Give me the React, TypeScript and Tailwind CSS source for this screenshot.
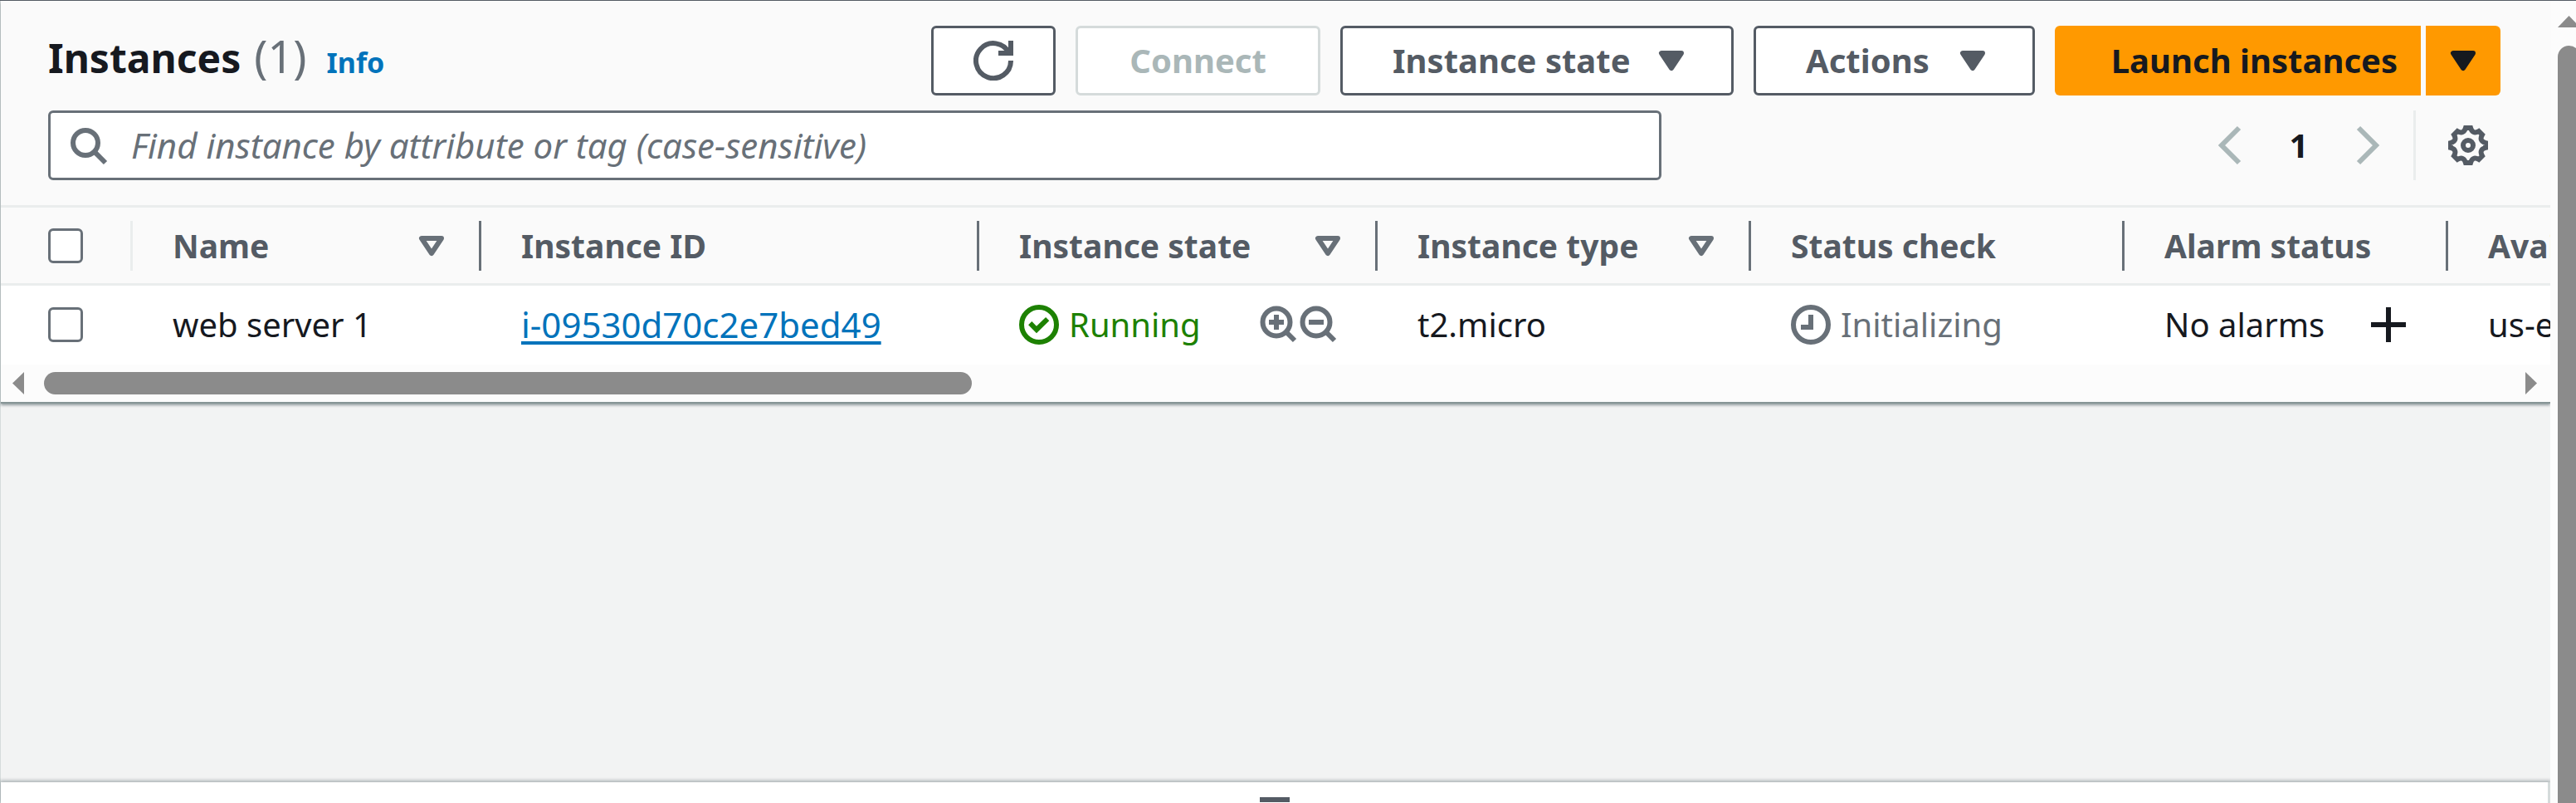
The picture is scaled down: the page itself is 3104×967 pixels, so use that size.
import React from "react";

type IconProps = { className?: string; children: React.ReactNode };

function Icon({ className = "", children }: IconProps) {
  return (
    <svg
      viewBox="0 0 16 16"
      className={`size-12 shrink-0 ${className}`}
      fill="none"
      stroke="currentColor"
      strokeWidth="2"
      aria-hidden="true"
    >
      {children}
    </svg>
  );
}

function Caret({ filled = false, className = "" }: { filled?: boolean; className?: string }) {
  return (
    <Icon className={className}>
      <path d="M4 5h8l-4 6-4-6z" strokeLinejoin="round" fill={filled ? "currentColor" : "none"} />
    </Icon>
  );
}

function ZoomIcon({ plus = false }: { plus?: boolean }) {
  return (
    <svg viewBox="0 0 48 48" className="size-12 shrink-0" fill="none" stroke="currentColor" strokeWidth="6" aria-hidden="true">
      <circle cx="22" cy="21" r="16.5" />
      <path d="M33 32l11 11" />
      <path d={plus ? "M13 21h18M22 12v18" : "M13 21h18"} />
    </svg>
  );
}

const gearPath = (() => {
  const pts: string[] = [];
  const at = (r: number, deg: number) => {
    const a = (deg * Math.PI) / 180;
    return `${(8 + r * Math.cos(a)).toFixed(2)} ${(8 + r * Math.sin(a)).toFixed(2)}`;
  };
  for (let i = 0; i < 8; i++) {
    const c = i * 45;
    pts.push(`${i === 0 ? "M" : "L"}${at(7.1, c - 8)}L${at(7.1, c + 8)}`);
    pts.push(`Q${at(4.6, c + 22.5)} ${at(7.1, c + 37)}`);
  }
  return pts.join("") + "Z";
})();

const outlineButton =
  "flex h-21 items-center rounded-md border-3 border-[#545b64] bg-white font-bold text-[#545b64]";

type Column = { label: string; sortable?: boolean };

const columns: Column[] = [
  { label: "Name", sortable: true },
  { label: "Instance ID" },
  { label: "Instance state", sortable: true },
  { label: "Instance type", sortable: true },
  { label: "Status check" },
  { label: "Alarm status" },
  { label: "Availability Zone" },
];

function Checkbox({ label }: { label: string }) {
  return (
    <input
      type="checkbox"
      aria-label={label}
      className="ml-[57px] block size-[42px] appearance-none rounded-md border-3 border-[#687078] bg-white checked:bg-[#0073bb]"
    />
  );
}

function Toolbar() {
  return (
    <div className="flex items-start pt-[30px] pr-15 pl-[57px]">
      <h1 className="flex items-baseline text-[48px] leading-18">
        <span className="font-bold text-[#16191f]">Instances</span>
        <span className="ml-4 text-[54px] text-[#687078]">(1)</span>
        <a href="#info" className="ml-6 text-[34px] font-bold text-[#0073bb]">
          Info
        </a>
      </h1>
      <div className="ml-auto flex gap-6">
        <button type="button" aria-label="Refresh" className={`${outlineButton} px-12`}>
          <Icon>
            <path d="M10 5h5V0" />
            <path d="M15 8a7 7 0 1 1-.7-3" />
          </Icon>
        </button>
        <button
          type="button"
          disabled
          className="h-21 w-[295px] rounded-md border-3 border-[#d5dbdb] bg-white font-bold text-[#aab7b8]"
        >
          Connect
        </button>
        <button type="button" className={`${outlineButton} w-[474px] justify-between pr-12 pl-15`}>
          Instance state
          <Caret filled />
        </button>
        <button type="button" className={`${outlineButton} w-[339px] justify-between pr-12 pl-15`}>
          Actions
          <Caret filled />
        </button>
        <div className="flex gap-1.5">
          <button
            type="button"
            className="h-21 w-[441px] rounded-l-md bg-[#ff9900] pr-7 text-right font-bold text-[#16191f]"
          >
            Launch instances
          </button>
          <button
            type="button"
            aria-label="More launch options"
            className="flex h-21 items-center rounded-r-md bg-[#ff9900] px-[21px] text-[#16191f]"
          >
            <Caret filled />
          </button>
        </div>
      </div>
    </div>
  );
}

function FilterBar() {
  return (
    <div className="flex items-center justify-between pt-[18px] pr-[75px] pb-[30px] pl-[57px]">
      <label className="flex h-21 w-[1944px] items-center rounded-md border-3 border-[#687078] bg-white px-[21px] text-[42px] text-[#687078]">
        <Icon>
          <circle cx="7" cy="7" r="5" />
          <path d="M15 15l-4.6-4.6" />
        </Icon>
        <input
          type="text"
          aria-label="Filter instances"
          placeholder="Find instance by attribute or tag (case-sensitive)"
          className="ml-7 min-w-0 flex-1 bg-transparent text-[#16191f] outline-none placeholder:text-[#687078] placeholder:italic"
        />
      </label>
      <div className="flex items-center">
        <button type="button" aria-label="Previous page" className="text-[#aab7b8]">
          <Icon>
            <path d="M11 1L4 8l7 7" />
          </Icon>
        </button>
        <button type="button" className="w-[114px] text-center font-bold text-[#16191f]">
          1
        </button>
        <button type="button" aria-label="Next page" className="text-[#aab7b8]">
          <Icon>
            <path d="M5 1l7 7-7 7" />
          </Icon>
        </button>
        <div className="ml-[33px] flex h-21 items-center border-l-3 border-[#eaeded] pl-[39px]">
          <button type="button" aria-label="Preferences" className="text-[#545b64]">
            <Icon>
              <path d={gearPath} />
              <circle cx="8" cy="8" r="2" />
            </Icon>
          </button>
        </div>
      </div>
    </div>
  );
}

function InstancesTable() {
  return (
    <table className="w-[3500px] table-fixed border-collapse text-left whitespace-nowrap">
      <colgroup>
        <col className="w-[159px]" />
        <col className="w-[420px]" />
        <col className="w-[600px]" />
        <col className="w-[480px]" />
        <col className="w-[450px]" />
        <col className="w-[450px]" />
        <col className="w-[390px]" />
        <col />
      </colgroup>
      <thead>
        <tr className="h-[94px] border-y-3 border-[#eaeded] bg-[#fafafa] text-[39px] text-[#545b64]">
          <th scope="col" className="p-0">
            <div className="flex h-15 items-center border-r-3 border-[#eaeded]">
              <Checkbox label="Select all instances" />
            </div>
          </th>
          {columns.map((column) => (
            <th key={column.label} scope="col" className="p-0">
              <div className="flex h-15 items-center justify-between border-r-3 border-[#687078] pr-[33px] pl-12">
                {column.label}
                {column.sortable && <Caret className="text-[#687078]" />}
              </div>
            </th>
          ))}
        </tr>
      </thead>
      <tbody>
        <tr className="h-24 bg-white text-[#16191f]">
          <td className="p-0">
            <Checkbox label="Select web server 1" />
          </td>
          <td className="py-0 pr-0 pl-12">web server 1</td>
          <td className="py-0 pr-0 pl-12">
            <a href="#instance" className="text-[42px] text-[#0073bb] underline decoration-4 underline-offset-4">
              i-09530d70c2e7bed49
            </a>
          </td>
          <td className="py-0 pr-12 pl-12">
            <div className="flex items-center">
              <span className="flex items-center gap-3 text-[#1d8102]">
                <Icon>
                  <circle cx="8" cy="8" r="7" />
                  <path d="M4.4 7.4L7 10l4.4-4.3" />
                </Icon>
                Running
              </span>
              <span className="ml-auto flex text-[#687078]">
                <button type="button" aria-label="Filter for running">
                  <ZoomIcon plus />
                </button>
                <button type="button" aria-label="Filter out running">
                  <ZoomIcon />
                </button>
              </span>
            </div>
          </td>
          <td className="py-0 pr-0 pl-12">t2.micro</td>
          <td className="py-0 pr-0 pl-12">
            <span className="flex items-center gap-3 text-[#687078]">
              <Icon>
                <circle cx="8" cy="8" r="7" />
                <path d="M8 4v5H4" />
              </Icon>
              Initializing
            </span>
          </td>
          <td className="py-0 pr-12 pl-12">
            <div className="flex items-center justify-between">
              No alarms
              <button type="button" aria-label="Add alarm">
                <Icon>
                  <path d="M8 1v14M1 8h14" />
                </Icon>
              </button>
            </div>
          </td>
          <td className="py-0 pr-0 pl-12">us-east-1a</td>
        </tr>
      </tbody>
    </table>
  );
}

function HorizontalScrollbar() {
  return (
    <div className="flex h-[45px] items-center bg-[#fcfcfc] pr-4 pl-3.5 text-[#8b8b8b]">
      <svg viewBox="0 0 14 27" className="h-[27px] w-3.5" fill="currentColor" aria-hidden="true">
        <path d="M14 0v27L0 13.5z" />
      </svg>
      <div className="mx-6 flex-1">
        <div className="h-[27px] w-[37.7%] rounded-full bg-[#8b8b8b]" />
      </div>
      <svg viewBox="0 0 14 27" className="h-[27px] w-3.5" fill="currentColor" aria-hidden="true">
        <path d="M0 0v27l14-13.5z" />
      </svg>
    </div>
  );
}

export default function App() {
  return (
    <div className="flex h-screen overflow-hidden border-t border-[#545b64] bg-[#f2f3f3] font-['Noto_Sans',sans-serif] text-[40px] leading-15">
      <main className="flex min-w-0 flex-1 flex-col border-l border-[#d5dbdb]">
        <section className="overflow-hidden border-b-2 border-[#879596] bg-[#fafafa] shadow-[0_2px_3px_rgba(0,28,36,0.4)]">
          <Toolbar />
          <FilterBar />
          <div className="overflow-hidden">
            <InstancesTable />
          </div>
          <HorizontalScrollbar />
        </section>
        <div className="flex-1" />
        <section
          aria-label="Instance details"
          className="h-[25px] border-r-3 border-[#d5dbdb] bg-white pt-[18px] shadow-[0_-1px_4px_1px_rgba(0,28,36,0.3)]"
        >
          <div role="separator" className="mx-auto h-1.5 w-9 bg-[#545b64]" />
        </section>
      </main>
      <div className="flex w-[31px] shrink-0 flex-col overflow-hidden bg-[#fcfcfc] pt-[18px] pl-[9px] text-[#8b8b8b]">
        <svg viewBox="0 0 27 14" className="h-3.5 w-[27px] shrink-0" fill="currentColor" aria-hidden="true">
          <path d="M0 14h27L13.5 0z" />
        </svg>
        <div className="mt-[22px] w-[27px] flex-1 rounded-t-full bg-[#8b8b8b]" />
      </div>
    </div>
  );
}
